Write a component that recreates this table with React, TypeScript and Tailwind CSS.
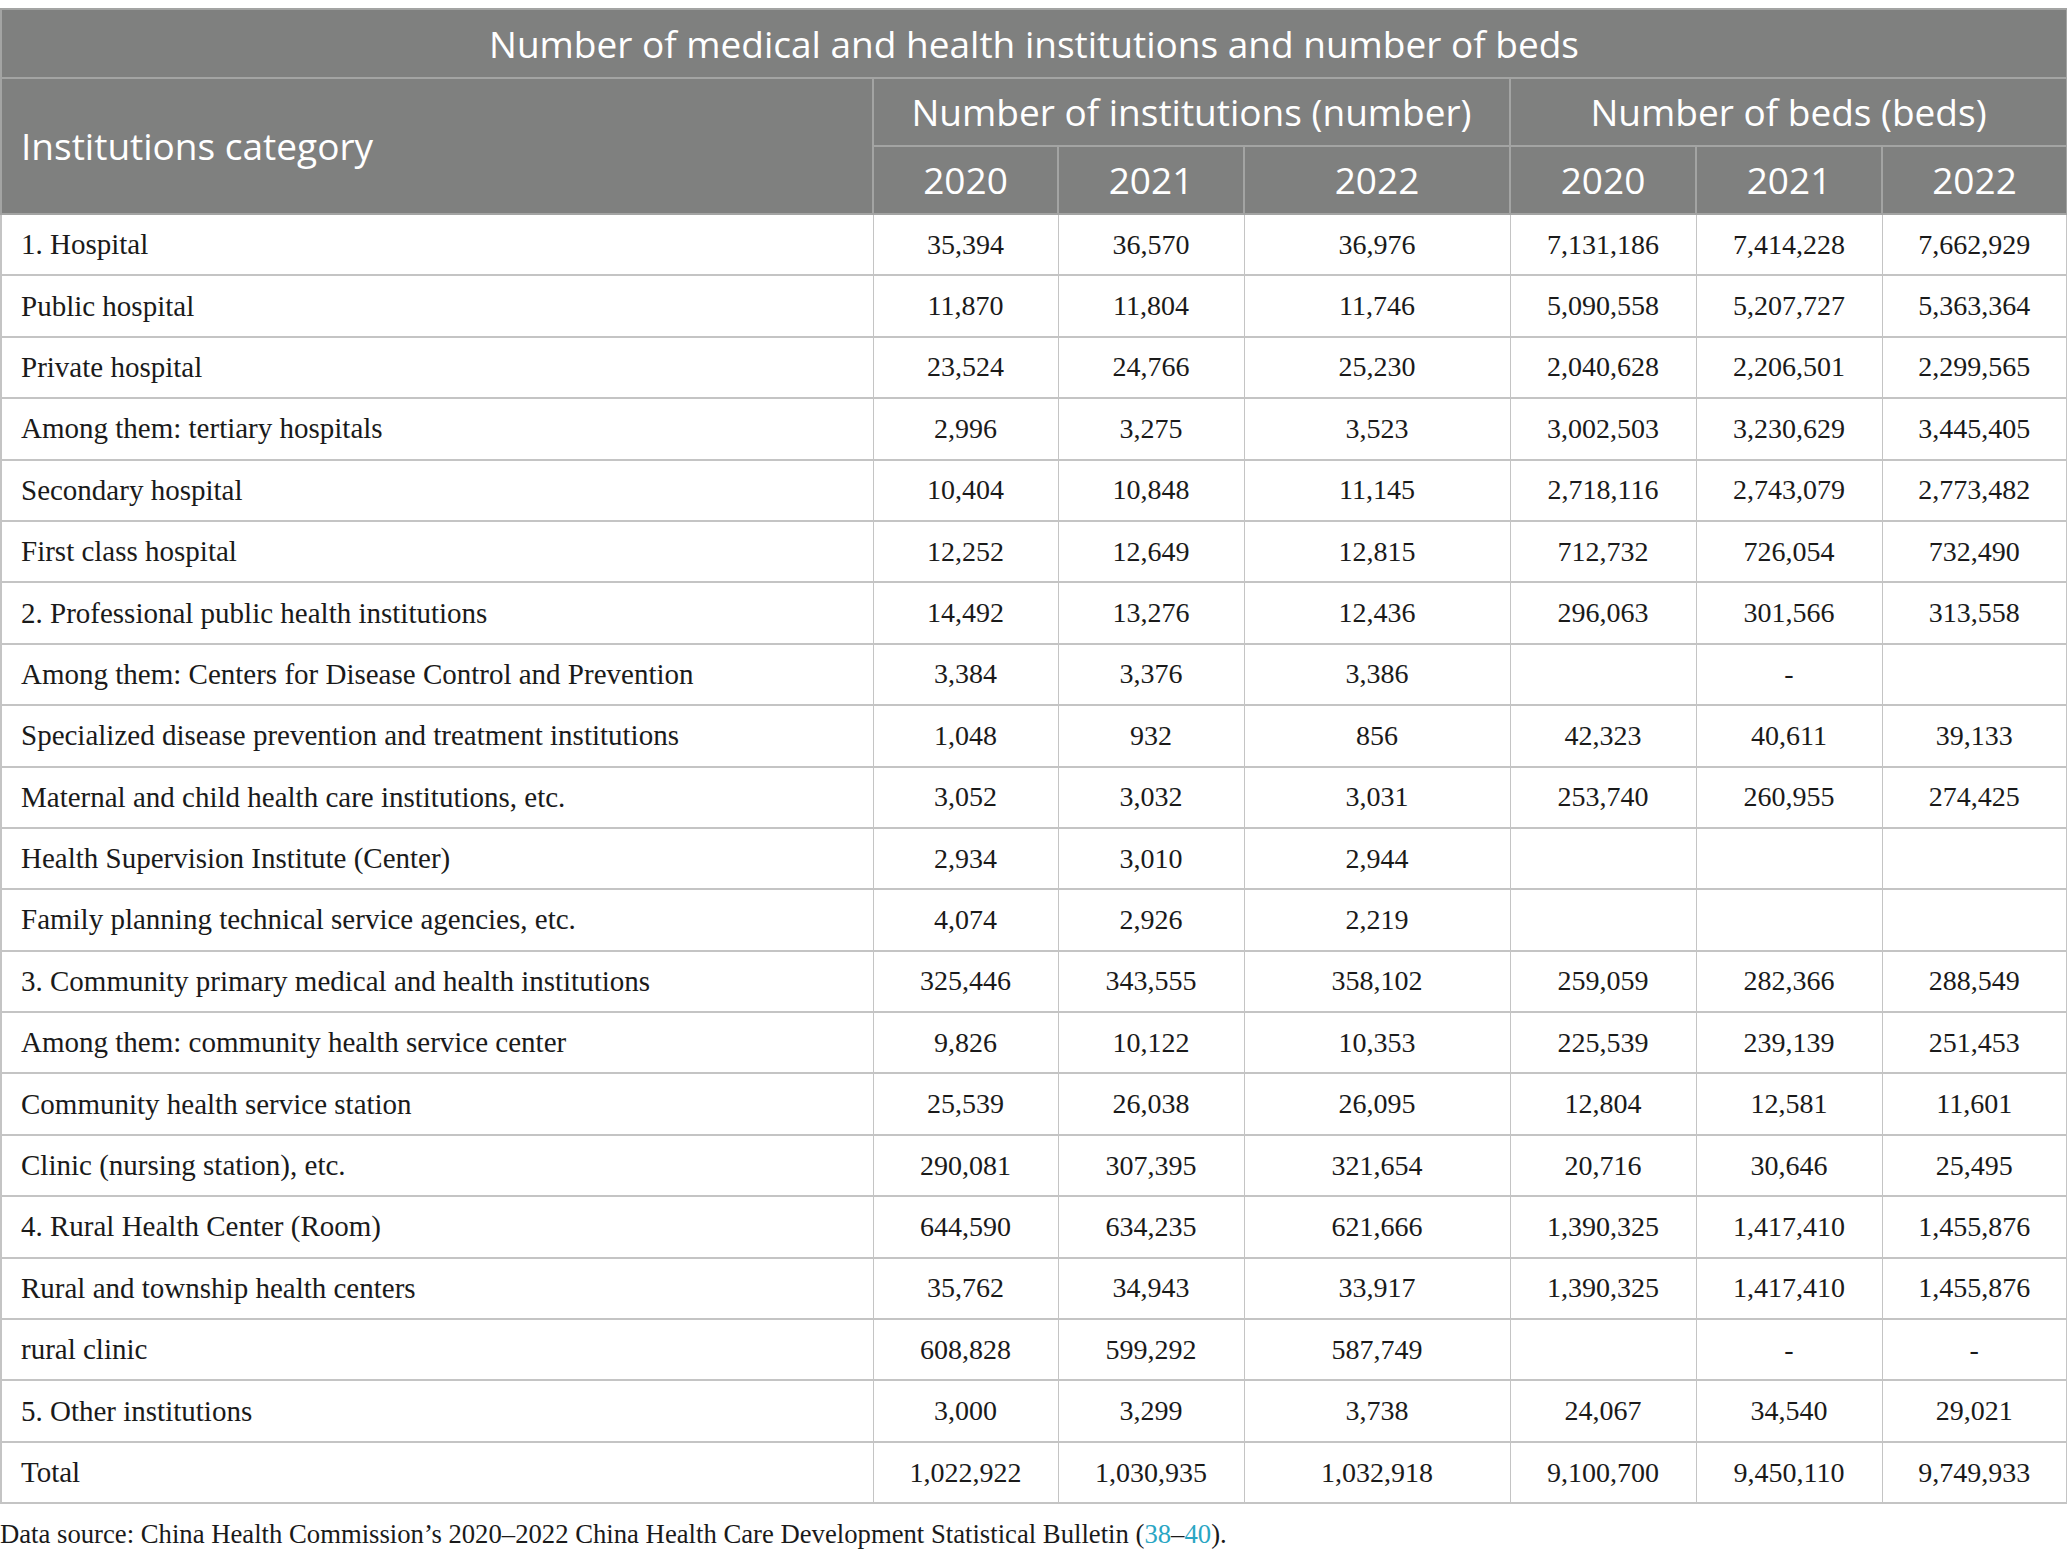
import React from "react";

const rows: string[][] = [
  ["1. Hospital", "35,394", "36,570", "36,976", "7,131,186", "7,414,228", "7,662,929"],
  ["Public hospital", "11,870", "11,804", "11,746", "5,090,558", "5,207,727", "5,363,364"],
  ["Private hospital", "23,524", "24,766", "25,230", "2,040,628", "2,206,501", "2,299,565"],
  ["Among them: tertiary hospitals", "2,996", "3,275", "3,523", "3,002,503", "3,230,629", "3,445,405"],
  ["Secondary hospital", "10,404", "10,848", "11,145", "2,718,116", "2,743,079", "2,773,482"],
  ["First class hospital", "12,252", "12,649", "12,815", "712,732", "726,054", "732,490"],
  ["2. Professional public health institutions", "14,492", "13,276", "12,436", "296,063", "301,566", "313,558"],
  ["Among them: Centers for Disease Control and Prevention", "3,384", "3,376", "3,386", "", "-", ""],
  ["Specialized disease prevention and treatment institutions", "1,048", "932", "856", "42,323", "40,611", "39,133"],
  ["Maternal and child health care institutions, etc.", "3,052", "3,032", "3,031", "253,740", "260,955", "274,425"],
  ["Health Supervision Institute (Center)", "2,934", "3,010", "2,944", "", "", ""],
  ["Family planning technical service agencies, etc.", "4,074", "2,926", "2,219", "", "", ""],
  ["3. Community primary medical and health institutions", "325,446", "343,555", "358,102", "259,059", "282,366", "288,549"],
  ["Among them: community health service center", "9,826", "10,122", "10,353", "225,539", "239,139", "251,453"],
  ["Community health service station", "25,539", "26,038", "26,095", "12,804", "12,581", "11,601"],
  ["Clinic (nursing station), etc.", "290,081", "307,395", "321,654", "20,716", "30,646", "25,495"],
  ["4. Rural Health Center (Room)", "644,590", "634,235", "621,666", "1,390,325", "1,417,410", "1,455,876"],
  ["Rural and township health centers", "35,762", "34,943", "33,917", "1,390,325", "1,417,410", "1,455,876"],
  ["rural clinic", "608,828", "599,292", "587,749", "", "-", "-"],
  ["5. Other institutions", "3,000", "3,299", "3,738", "24,067", "34,540", "29,021"],
  ["Total", "1,022,922", "1,030,935", "1,032,918", "9,100,700", "9,450,110", "9,749,933"],
];

const sans = { fontFamily: '"Open Sans", "Noto Sans", sans-serif' };
const serif = { fontFamily: '"Liberation Serif", "DejaVu Serif", serif' };

export default function App() {
  return (
    <div className="bg-white w-[2067px] h-[1559px] pt-[8px]">
      <table className="table-fixed border-collapse w-[2066px]" style={serif}>
        <colgroup>
          <col className="w-[872px]" />
          <col className="w-[185px]" />
          <col className="w-[186px]" />
          <col className="w-[266px]" />
          <col className="w-[186px]" />
          <col className="w-[186px]" />
          <col className="w-[185px]" />
        </colgroup>
        <thead className="bg-[#7f807f] text-white" style={sans}>
          <tr className="h-[69px]">
            <th colSpan={7} className="border-[2px] border-[#a3a4a3] font-normal text-[37px] text-center">
              Number of medical and health institutions and number of beds
            </th>
          </tr>
          <tr className="h-[68px]">
            <th rowSpan={2} className="border-[2px] border-[#a3a4a3] font-normal text-[37px] text-left pl-[19px]">
              Institutions category
            </th>
            <th colSpan={3} className="border-[2px] border-[#a3a4a3] font-normal text-[37px] text-center">
              Number of institutions (number)
            </th>
            <th colSpan={3} className="border-[2px] border-[#a3a4a3] font-normal text-[37px] text-center">
              Number of beds (beds)
            </th>
          </tr>
          <tr className="h-[68px]">
            {["2020", "2021", "2022", "2020", "2021", "2022"].map((y, i) => (
              <th key={i} className="border-[2px] border-[#a3a4a3] font-normal text-[37px] text-center">
                {y}
              </th>
            ))}
          </tr>
        </thead>
        <tbody className="text-[#1a1a1a]">
          {rows.map((r, i) => (
            <tr key={i} className="h-[61.4px]">
              {r.map((c, j) => (
                <td
                  key={j}
                  className={
                    "border-x border-y-[2px] border-[#c4c4c4] leading-none " +
                    (j === 0 ? "text-left text-[29px] pl-[19px] border-l-[2px]" : "text-center text-[28px]") +
                    (j === 6 ? " border-r-[2px]" : "")
                  }
                >
                  {c}
                </td>
              ))}
            </tr>
          ))}
        </tbody>
      </table>
      <p className="text-[26.7px] text-[#1a1a1a] mt-[10px]" style={serif}>
        Data source: China Health Commission’s 2020–2022 China Health Care Development Statistical Bulletin (
        <span className="text-[#2aa6c4]">38</span>–<span className="text-[#2aa6c4]">40</span>).
      </p>
    </div>
  );
}
